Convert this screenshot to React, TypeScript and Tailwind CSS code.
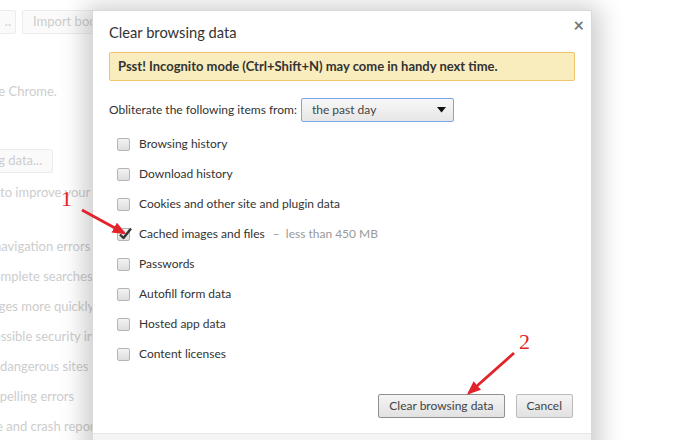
const font = { fontFamily: '"Segoe UI", Lato, "Liberation Sans", sans-serif' };

const items = [
  { label: "Browsing history" },
  { label: "Download history" },
  { label: "Cookies and other site and plugin data" },
  { label: "Cached images and files", note: "less than 450 MB", checked: true },
  { label: "Passwords" },
  { label: "Autofill form data" },
  { label: "Hosted app data" },
  { label: "Content licenses" },
];

const behind = [
  { text: "navigation errors", shift: "-ml-[6px]" },
  { text: "complete searches a", shift: "-ml-[13px]" },
  { text: "pages more quickly", shift: "-ml-[15px]" },
  { text: "possible security incid", shift: "-ml-[14px]" },
  { text: "dangerous sites", shift: "ml-0" },
  { text: "spelling errors", shift: "-ml-[6px]" },
  { text: "e and crash reports", shift: "-ml-[4px]" },
];

function Checkbox({ checked }: { checked?: boolean }) {
  return (
    <span className="relative inline-block h-[13px] w-[13px] shrink-0 rounded-[2px] border border-[#b5b5b5] bg-gradient-to-b from-[#f2f2f2] to-[#dedede]">
      {checked ? (
        <svg className="absolute -top-[3px] left-[0px]" width="15" height="15" viewBox="0 0 15 15">
          <path d="M2 8.5 L5.5 12 L13 2.5" fill="none" stroke="#333" strokeWidth="2.4" strokeLinejoin="round" />
        </svg>
      ) : null}
    </span>
  );
}

function BackgroundPage() {
  return (
    <div className="flex flex-col text-[13px] text-[#cdcdcd]" style={font}>
      <div className="flex gap-[6px] pt-[10px]">
        <span className="-ml-[4px] flex h-[24px] w-[20px] items-center justify-end rounded-[2px] border border-[#ececec] bg-[#fafafa] pr-[4px]">
          ..
        </span>
        <span className="flex h-[24px] items-center rounded-[2px] border border-[#ececec] bg-[#fafafa] px-[10px]">
          Import bookmarks
        </span>
      </div>
      <div className="-ml-[69px] mt-[48px] h-[18px]">using Google Chrome.</div>
      <div className="mt-[49px] flex">
        <span className="-ml-[58px] flex h-[24px] items-center rounded-[2px] border border-[#ececec] bg-[#fafafa] px-[10px]">
          browsing data...
        </span>
      </div>
      <div className="mt-[10px] h-[18px]">to improve your browsing</div>
      <div className="mt-[36px] flex flex-col">
        {behind.map((b) => (
          <div key={b.text} className={`h-[30px] leading-[18px] ${b.shift}`}>
            {b.text}
          </div>
        ))}
      </div>
    </div>
  );
}

export default function App() {
  return (
    <div className="relative h-[440px] w-[698px] overflow-hidden bg-white">
      <BackgroundPage />

      <div
        className="absolute left-[92px] top-[10px] flex h-[460px] w-[500px] flex-col rounded-[2px] border border-[#d9d9d9] bg-white text-[12px] text-[#333] shadow-[0_4px_24px_8px_rgba(0,0,0,0.2)]"
        style={font}
      >
        <button className="absolute right-[7px] top-[5px] text-[18px] font-bold leading-none text-[#777]">×</button>
        <div className="px-[16px] pt-[9px]">
          <div className="flex h-[24px] items-center text-[14.7px] text-[#333]">Clear browsing data</div>
          <div className="mt-[8px] flex h-[29px] items-center rounded-[2px] border border-[#f0c36d] bg-[#f9edbe] px-[8px] text-[13px] font-bold text-[#333]">
            Psst! Incognito mode (Ctrl+Shift+N) may come in handy next time.
          </div>
          <div className="mt-[17px] flex h-[24px] items-center gap-[4px]">
            <span>Obliterate the following items from:</span>
            <span className="flex h-[24px] w-[153px] items-center justify-between rounded-[2px] border border-[#7aa5e8] bg-gradient-to-b from-[#f8f8f8] to-[#e6e6e6] pl-[10px] pr-[7px] text-[#444]">
              the past day
              <svg width="9" height="6" viewBox="0 0 9 6">
                <path d="M0 0 H9 L4.5 5.5 Z" fill="#111" />
              </svg>
            </span>
          </div>
          <div className="mt-[7px] flex flex-col">
            {items.map((it) => (
              <label key={it.label} className="flex h-[30px] items-center gap-[9px] pl-[8px]">
                <Checkbox checked={it.checked} />
                <span className="text-[#333]">
                  {it.label}
                  {it.note ? <span className="ml-[8px] text-[#999]">–&nbsp;&nbsp;{it.note}</span> : null}
                </span>
              </label>
            ))}
          </div>
          <div className="mt-[25px] flex justify-end gap-[11px] pr-[2px]">
            <button className="h-[24px] rounded-[2px] border border-[#8f8f8f] bg-gradient-to-b from-[#f4f4f4] to-[#e2e2e2] px-[10px] text-[#444]">
              Clear browsing data
            </button>
            <button className="h-[24px] rounded-[2px] border border-[#bcbcbc] bg-gradient-to-b from-[#f4f4f4] to-[#e2e2e2] px-[10px] text-[#444]">
              Cancel
            </button>
          </div>
        </div>
        <div className="mt-[15px] flex-1 border-t border-[#e5e5e5] bg-[#f4f4f4]" />
      </div>

      <svg className="pointer-events-none absolute left-0 top-0" width="698" height="440">
        <defs>
          <marker id="head" markerWidth="5" markerHeight="4" refX="4" refY="2" orient="auto" markerUnits="strokeWidth">
            <path d="M0 0 L5 2 L0 4 Z" fill="#e3232b" />
          </marker>
        </defs>
        <line x1="82" y1="210" x2="124" y2="233" stroke="#e3232b" strokeWidth="2.8" markerEnd="url(#head)" />
        <line x1="514" y1="353" x2="469" y2="393" stroke="#e3232b" strokeWidth="2.8" markerEnd="url(#head)" />
      </svg>
      <span className="absolute left-[61px] top-[188px] text-[22px] leading-none text-[#e3232b]" style={{ fontFamily: '"Liberation Serif", serif' }}>
        1
      </span>
      <span className="absolute left-[519px] top-[331px] text-[22px] leading-none text-[#e3232b]" style={{ fontFamily: '"Liberation Serif", serif' }}>
        2
      </span>
    </div>
  );
}
